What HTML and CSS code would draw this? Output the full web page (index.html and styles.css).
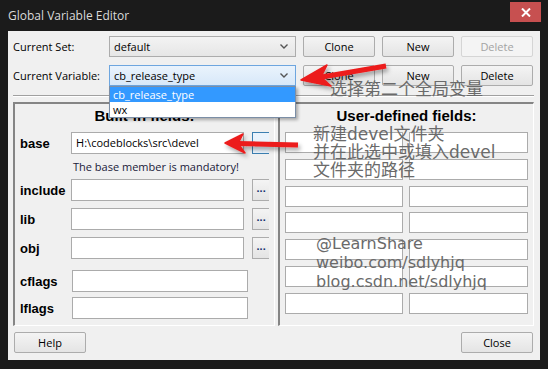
FILE: index.html
```html
<!DOCTYPE html>
<html lang="en">
<head>
  <meta charset="UTF-8">
  <title>Global Variable Editor</title>
  <link rel="stylesheet" href="styles.css">
</head>
<body>

<div id="window">
  <div class="titlebar">
    <span class="title">Global Variable Editor</span>
    <div class="close">
      <svg width="10" height="9" viewBox="0 0 10 9"><path d="M1 0.5 L9 8.5 M9 0.5 L1 8.5" stroke="#fff" stroke-width="2"/></svg>
    </div>
  </div>

  <div class="client">
    <div class="toprows">
      <label>Current Set:</label>
      <div class="combo">
        <span>default</span>
        <svg width="8" height="5" viewBox="0 0 8 5"><path d="M0.5 0.5 L4 4 L7.5 0.5" fill="none" stroke="#555" stroke-width="1.4"/></svg>
      </div>
      <button class="btn">Clone</button>
      <button class="btn">New</button>
      <button class="btn" disabled>Delete</button>

      <label>Current Variable:</label>
      <div class="combo active">
        <span>cb_release_type</span>
        <svg width="8" height="5" viewBox="0 0 8 5"><path d="M0.5 0.5 L4 4 L7.5 0.5" fill="none" stroke="#555" stroke-width="1.4"/></svg>
      </div>
      <button class="btn">Clone</button>
      <button class="btn">New</button>
      <button class="btn">Delete</button>
    </div>

    <div class="sep"></div>

    <div class="panels">
      <div class="panel builtin">
        <h3>Built-in fields:</h3>
        <div class="frow">
          <b>base</b>
          <div class="input">H:\codeblocks\src\devel</div>
          <button class="dots focus">...</button>
        </div>
        <div class="note">The base member is mandatory!</div>
        <div class="frow include">
          <b>include</b>
          <div class="input"></div>
          <button class="dots">...</button>
        </div>
        <div class="frow lib">
          <b>lib</b>
          <div class="input"></div>
          <button class="dots">...</button>
        </div>
        <div class="frow obj">
          <b>obj</b>
          <div class="input"></div>
          <button class="dots">...</button>
        </div>
        <div class="frow cflags">
          <b>cflags</b>
          <div class="input"></div>
        </div>
        <div class="frow lflags">
          <b>lflags</b>
          <div class="input"></div>
        </div>
      </div>

      <div class="panel user">
        <h3>User-defined fields:</h3>
        <div class="ugrid">
          <div class="input"></div><div class="input"></div>
          <div class="input"></div><div class="input"></div>
          <div class="input"></div><div class="input"></div>
          <div class="input"></div><div class="input"></div>
          <div class="input"></div><div class="input"></div>
          <div class="input"></div><div class="input"></div>
          <div class="input"></div><div class="input"></div>
        </div>
      </div>
    </div>

    <div class="bottom">
      <button class="btn">Help</button>
      <button class="btn">Close</button>
    </div>
  </div>

  <!-- open dropdown of the second combo -->
  <div class="droplist">
    <div class="item selected">cb_release_type</div>
    <div class="item">wx</div>
  </div>

  <!-- annotations drawn over the dialog -->
  <svg class="arrows" width="548" height="369" viewBox="0 0 548 369">
    <defs>
      <filter id="shadow" x="-20%" y="-50%" width="140%" height="200%">
        <feDropShadow dx="2" dy="3" stdDeviation="2" flood-color="#000" flood-opacity="0.35"/>
      </filter>
    </defs>
    <g fill="#ec1b1b" stroke="#ec1b1b" filter="url(#shadow)">
      <line x1="386" y1="66" x2="316" y2="78" stroke-width="5"/>
      <polygon points="301,80 327,65 321,77 331,86" stroke-width="1.5" stroke-linejoin="round"/>
      <line x1="298" y1="145" x2="236" y2="143.5" stroke-width="5"/>
      <polygon points="225,143 243,134 238,143.5 245,153" stroke-width="1.5" stroke-linejoin="round"/>
    </g>
  </svg>

  <div class="annot a-pick">选择第二个全局变量</div>
  <div class="annot a-devel">新建devel文件夹<br>并在此选中或填入devel<br>文件夹的路径</div>
  <div class="annot a-credit">@LearnShare<br>weibo.com/sdlyhjq<br>blog.csdn.net/sdlyhjq</div>
</div>

</body>
</html>
```

FILE: styles.css
```css
* {
  box-sizing: border-box;
}

body {
  margin: 0;
  background-color: #1b1b1b;
  font-family: "Open Sans", sans-serif;
  font-size: 11px;
  color: #000;
}

#window {
  position: relative;
  width: 548px;
  height: 369px;
  overflow: hidden;
}

.titlebar {
  height: 31px;
  display: flex;
  justify-content: space-between;
  align-items: flex-start;
  padding: 0 7px 0 8px;
}

.titlebar .title {
  color: #dadada;
  font-size: 12px;
  line-height: 32px;
}

.titlebar .close {
  margin-top: 2px;
  width: 31px;
  height: 20px;
  background-color: #c75050;
  display: flex;
  align-items: center;
  justify-content: center;
}

.client {
  margin: 0 8px;
  height: 329px;
  background-color: #f0f0f0;
  padding: 5px 6px 0 5px;
}

.toprows {
  display: grid;
  grid-template-columns: 89px 187px 72px 72px 72px;
  grid-auto-rows: 21px;
  column-gap: 7px;
  row-gap: 8px;
  align-items: center;
}

.toprows label {
  white-space: nowrap;
}

.combo {
  height: 21px;
  display: flex;
  align-items: center;
  justify-content: space-between;
  padding: 0 7px 0 4px;
  border: 1px solid #acacac;
  background: linear-gradient(#f3f3f3, #e6e6e6);
}

.combo.active {
  border-color: #6ea6df;
  background: linear-gradient(#eaf3fc, #d7e8f9);
}

.btn {
  height: 21px;
  padding: 0;
  font-family: "Open Sans", sans-serif;
  font-size: 11px;
  color: #000;
  border: 1px solid #acacac;
  border-radius: 2px;
  background: linear-gradient(#f4f4f4, #e4e4e4);
}

.btn:disabled {
  color: #a3a3a3;
  border-color: #d5d5d5;
  background: #f4f4f4;
}

.sep {
  width: 521px;
  margin: 9px 0 5px;
  border-top: 1px solid #a0a0a0;
  border-bottom: 1px solid #fff;
}

.panels {
  display: flex;
  gap: 3px;
  height: 224px;
}

.panel {
  border-style: solid;
  border-width: 2px 1px 1px 2px;
  border-color: #858585 #fff #fff #858585;
  padding: 0 5px;
  overflow: hidden;
}

.panel h3 {
  margin: 3px 0 8px;
  font-family: "Liberation Sans", Arial, sans-serif;
  font-size: 15px;
  line-height: 17px;
  text-align: center;
}

.builtin {
  width: 262px;
}

.user {
  width: 256px;
}

.input {
  height: 22px;
  background-color: #fff;
  border: 1px solid #ababab;
  padding: 0 4px;
  line-height: 20px;
  white-space: nowrap;
}

.frow {
  display: flex;
  align-items: center;
}

.frow b {
  width: 52px;
  font-family: "Liberation Sans", Arial, sans-serif;
  font-size: 13px;
}

.frow .input {
  width: 176px;
}

.dots {
  width: 17px;
  height: 22px;
  margin-left: 8px;
  padding: 0 0 4px;
  font-family: "Liberation Sans", Arial, sans-serif;
  font-weight: bold;
  font-size: 11px;
  color: #1a3570;
  border: 1px solid #acacac;
  border-right: 0;
  background: linear-gradient(#f4f4f4, #e4e4e4);
}

.dots.focus {
  border-color: #3c7fb1;
  background: #eaf3fc;
}

.note {
  margin: 6px 0 5px 53px;
  line-height: 14px;
  color: #1a1a3a;
}

.frow.lib,
.frow.obj {
  margin-top: 7px;
}

.frow.cflags {
  margin-top: 11px;
}

.frow.lflags {
  margin-top: 5px;
}

.ugrid {
  display: grid;
  grid-template-columns: 118px 119px;
  grid-auto-rows: 21px;
  column-gap: 6px;
  row-gap: 5.8px;
}

.ugrid .input {
  height: 21px;
}

.bottom {
  display: flex;
  justify-content: space-between;
  margin-top: 6px;
  padding: 0 1px;
}

.bottom .btn {
  width: 72px;
}

.droplist {
  position: absolute;
  left: 109px;
  top: 86px;
  width: 187px;
  height: 32px;
  background-color: #fff;
  border: 1px solid #7b8ea6;
  box-shadow: 2px 2px 3px rgba(0, 0, 0, 0.3);
}

.droplist .item {
  height: 15px;
  line-height: 15px;
  padding: 0 3px;
}

.droplist .item.selected {
  background-color: #3399ff;
  color: #fff;
}

.arrows {
  position: absolute;
  left: 0;
  top: 0;
}

.annot {
  position: absolute;
  color: #6a6a6a;
  font-family: "DejaVu Sans", "Noto Sans CJK SC", sans-serif;
  font-size: 17px;
  line-height: 18px;
  white-space: nowrap;
}

.a-pick {
  left: 330px;
  top: 80px;
}

.a-devel {
  left: 313px;
  top: 125px;
}

.a-credit {
  left: 316px;
  top: 234px;
  font-size: 16px;
  line-height: 19px;
}
```
